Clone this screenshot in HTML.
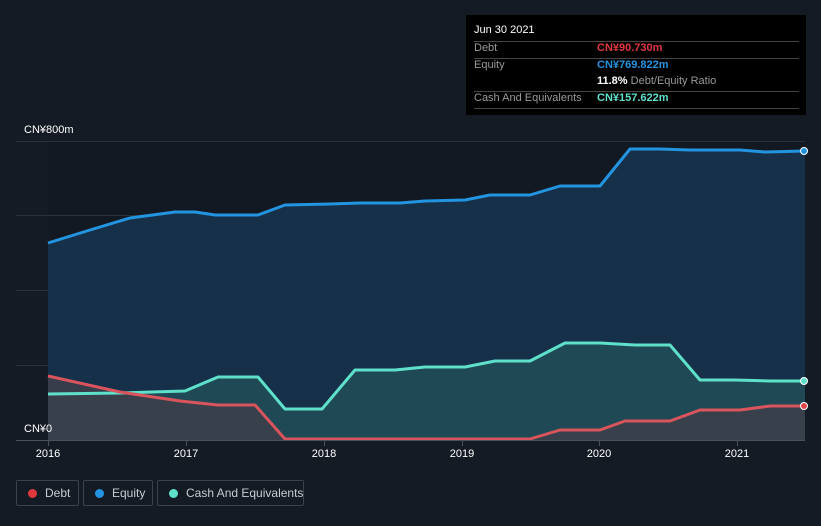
<!DOCTYPE html>
<html><head><style>
html,body{margin:0;width:821px;height:526px;overflow:hidden}
body{background:#151b25;font-family:"Liberation Sans",sans-serif;position:relative}
.tt{position:absolute;left:466px;top:15px;width:340px;height:100px;background:#000;color:#fff;font-size:11px}
.tt .r{position:absolute;left:8px;width:325px;border-top:1px solid #444;}
.lg{position:absolute;top:480px;height:26px;border:1px solid #3c414b;border-radius:2px;color:#c8ccd2;font-size:12px;line-height:24px;box-sizing:border-box;white-space:nowrap;overflow:hidden}
.lg i{display:inline-block;width:9px;height:9px;border-radius:50%;margin:0 8px 0 11px;vertical-align:-1px}
</style></head><body>
<svg width="821" height="526" style="position:absolute;left:0;top:0">
<rect x="48" y="141" width="757" height="299" fill="#131923"/>
<g stroke="#2a313c" stroke-width="1">
<line x1="16" y1="141.5" x2="805" y2="141.5"/><line x1="16" y1="215.5" x2="805" y2="215.5"/><line x1="16" y1="290.5" x2="805" y2="290.5"/><line x1="16" y1="365.5" x2="805" y2="365.5"/>
</g>
<polygon fill="#16304a" points="48,243 90,230 130,218 175,212 195,212 215,215 258,215 285,205 330,204 360,203 400,203 425,201 465,200 490,195 530,195 560,186 600,186 630,149 660,149 690,150 740,150 765,152 805,151 805,440 48,440"/>
<polygon fill="#1f4a55" points="48,394 120,393 185,391 218,377 258,377 285,409 322,409 355,370 395,370 425,367 465,367 495,361 530,361 565,343 600,343 635,345 670,345 700,380 735,380 770,381 805,381 805,440 48,440"/>
<polygon fill="#3d3f4a" opacity="0.85" points="48,376 120,392 180,401 218,405 255,405 285,439 460,439 530,439 560,430 600,430 625,421 670,421 700,410 740,410 770,406 805,406 805,440 48,440"/>
<g fill="none" stroke-width="3" stroke-linejoin="round">
<polyline stroke="#2394df" points="48,243 90,230 130,218 175,212 195,212 215,215 258,215 285,205 330,204 360,203 400,203 425,201 465,200 490,195 530,195 560,186 600,186 630,149 660,149 690,150 740,150 765,152 805,151"/>
<polyline stroke="#5ee0cb" points="48,394 120,393 185,391 218,377 258,377 285,409 322,409 355,370 395,370 425,367 465,367 495,361 530,361 565,343 600,343 635,345 670,345 700,380 735,380 770,381 805,381"/>
<polyline stroke="#d9545c" points="48,376 120,392 180,401 218,405 255,405 285,439 460,439 530,439 560,430 600,430 625,421 670,421 700,410 740,410 770,406 805,406"/>
</g>
<line x1="16" y1="440.5" x2="805" y2="440.5" stroke="#4a505a"/>
<g stroke="#4a505a"><line x1="48.5" y1="440" x2="48.5" y2="446"/><line x1="186.5" y1="440" x2="186.5" y2="446"/><line x1="324.5" y1="440" x2="324.5" y2="446"/><line x1="462.5" y1="440" x2="462.5" y2="446"/><line x1="599.5" y1="440" x2="599.5" y2="446"/><line x1="737.5" y1="440" x2="737.5" y2="446"/></g>
<circle cx="804" cy="151" r="3.5" fill="#2394df" stroke="#fff" stroke-width="1"/>
<circle cx="804" cy="381" r="3.5" fill="#5ee0cb" stroke="#fff" stroke-width="1"/>
<circle cx="804" cy="406" r="3.5" fill="#e0464e" stroke="#fff" stroke-width="1"/>
<g fill="#fff" font-size="11" font-family="Liberation Sans">
<text x="24" y="133">CN¥800m</text><text x="24" y="432">CN¥0</text>
<g text-anchor="middle"><text x="48" y="457">2016</text><text x="186" y="457">2017</text><text x="324" y="457">2018</text><text x="462" y="457">2019</text><text x="599" y="457">2020</text><text x="737" y="457">2021</text></g>
</g>
</svg>
<div class="tt">
<div style="position:absolute;left:8px;top:9px">Jun 30 2021</div>
<div class="r" style="top:26px"></div>
<div style="position:absolute;left:8px;top:27px;color:#999">Debt</div><div style="position:absolute;left:131px;top:27px;color:#e0383f;font-weight:bold">CN¥90.730m</div>
<div class="r" style="top:43px"></div>
<div style="position:absolute;left:8px;top:44px;color:#999">Equity</div><div style="position:absolute;left:131px;top:44px;color:#2394df;font-weight:bold">CN¥769.822m</div>
<div style="position:absolute;left:131px;top:60px"><b>11.8%</b> <span style="color:#999">Debt/Equity Ratio</span></div>
<div class="r" style="top:76px"></div>
<div style="position:absolute;left:8px;top:77px;color:#999">Cash And Equivalents</div><div style="position:absolute;left:131px;top:77px;color:#5ee0cb;font-weight:bold">CN¥157.622m</div>
<div class="r" style="top:93px"></div>
</div>
<div class="lg" style="left:16px;width:63px"><i style="background:#e0383f"></i>Debt</div>
<div class="lg" style="left:83px;width:70px"><i style="background:#2394df"></i>Equity</div>
<div class="lg" style="left:157px;width:147px"><i style="background:#5ee0cb"></i>Cash And Equivalents</div>
</body></html>
